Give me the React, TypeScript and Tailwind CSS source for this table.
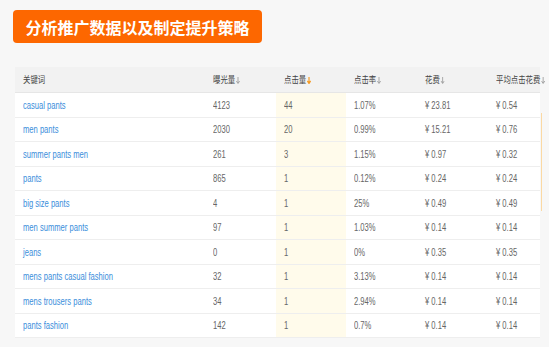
import React from "react";

const rows = [
  ["casual pants", "4123", "44", "1.07%", "¥ 23.81", "¥ 0.54"],
  ["men pants", "2030", "20", "0.99%", "¥ 15.21", "¥ 0.76"],
  ["summer pants men", "261", "3", "1.15%", "¥ 0.97", "¥ 0.32"],
  ["pants", "865", "1", "0.12%", "¥ 0.24", "¥ 0.24"],
  ["big size pants", "4", "1", "25%", "¥ 0.49", "¥ 0.49"],
  ["men summer pants", "97", "1", "1.03%", "¥ 0.14", "¥ 0.14"],
  ["jeans", "0", "1", "0%", "¥ 0.35", "¥ 0.35"],
  ["mens pants casual fashion", "32", "1", "3.13%", "¥ 0.14", "¥ 0.14"],
  ["mens trousers pants", "34", "1", "2.94%", "¥ 0.14", "¥ 0.14"],
  ["pants fashion", "142", "1", "0.7%", "¥ 0.14", "¥ 0.14"],
];

const headers = ["关键词", "曝光量", "点击量", "点击率", "花费", "平均点击花费"];

function Arrow({ active }: { active?: boolean }) {
  return (
    <svg width="5" height="7" viewBox="0 0 5 7" className="ml-[1px] shrink-0">
      <path
        d="M2.5 0 V6 M0.5 4 L2.5 6.5 L4.5 4"
        fill="none"
        stroke={active ? "#f59a23" : "#999"}
        strokeWidth={active ? 1.4 : 0.9}
      />
    </svg>
  );
}

const grid = "grid grid-cols-[190px_71px_70px_71px_71px_52px]";

export default function App() {
  return (
    <div
      className="w-[549px] h-[347px] bg-[#f7f7f7] pt-[10px] overflow-hidden relative"
      style={{ fontFamily: '"Liberation Sans", "Noto Sans CJK SC", sans-serif' }}
    >
      <div
        className="ml-[13px] w-[249px] h-[33px] rounded-[4px] bg-[#fd6700] flex items-center justify-center text-white text-[16px] font-bold"
        style={{ fontFamily: '"Noto Sans CJK SC", sans-serif' }}
      >
        分析推广数据以及制定提升策略
      </div>
      <div className="ml-[15px] mt-[24px] w-[525px] bg-white">
        <div className={`${grid} h-[26px] bg-[#f2f2f2] border-b border-[#e6e6e6]`}>
          {headers.map((h, i) => (
            <div key={h} className="flex items-center pl-[8px] pt-[1px] text-[9px] text-[#444]">
              <span
                className="inline-flex items-center origin-left scale-x-[0.82] whitespace-nowrap"
                style={{ fontFamily: '"Noto Sans CJK SC", sans-serif' }}
              >
                {h}
                {i > 0 && <Arrow active={i === 2} />}
              </span>
            </div>
          ))}
        </div>
        {rows.map((r) => (
          <div key={r[0]} className={`${grid} h-[24.5px] border-b border-[#eeeeee]`}>
            {r.map((c, i) => (
              <div
                key={i}
                className={`flex items-center pl-[8px] pt-[1px] text-[10px] ${
                  i === 0 ? "text-[#3b8edb]" : "text-[#666]"
                } ${i === 2 ? "bg-[#fffbeb]" : ""}`}
              >
                <span className="inline-block origin-left scale-x-[0.76] whitespace-nowrap">{c}</span>
              </div>
            ))}
          </div>
        ))}
      </div>
      <div className="absolute left-[541px] top-[113px] w-[1px] h-[98px] bg-[#fbd9a3]" />
    </div>
  );
}
